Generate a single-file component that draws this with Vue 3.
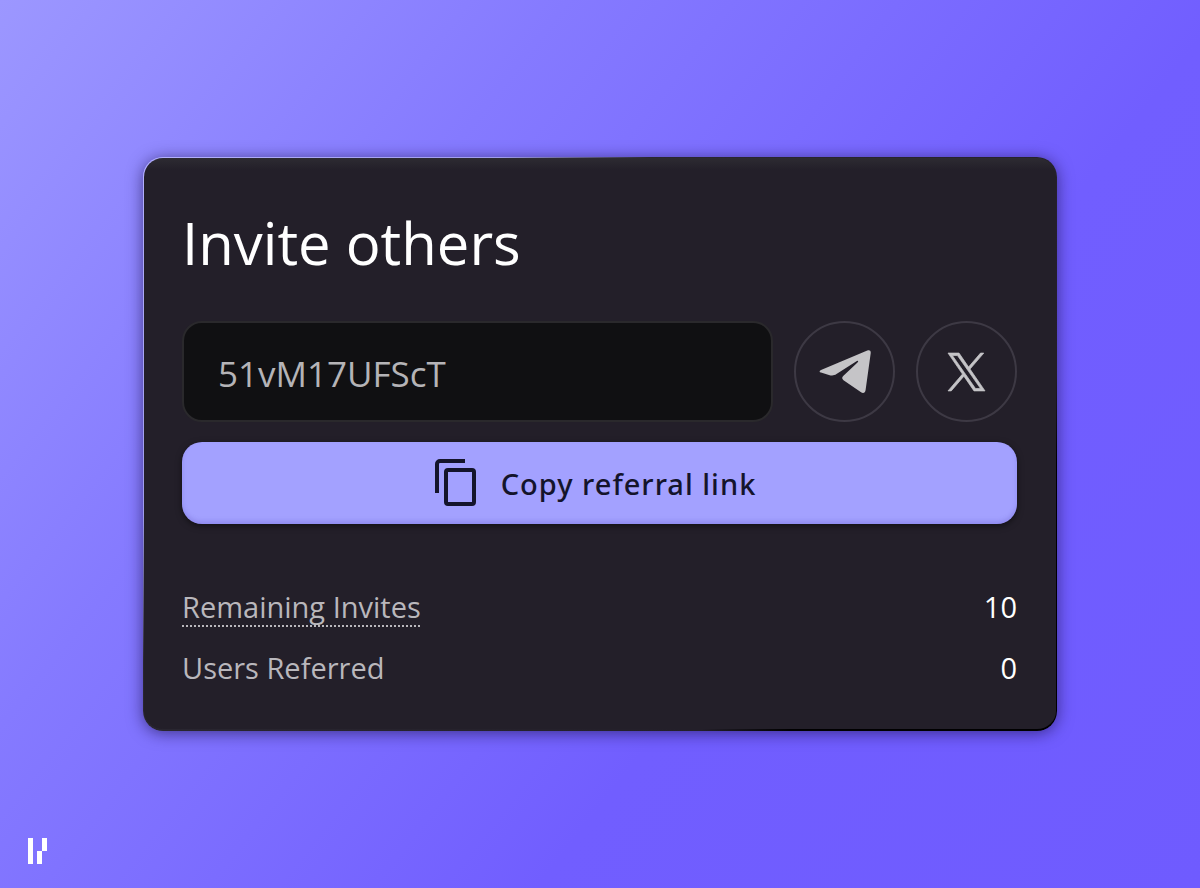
<template>
  <div class="page">
    <main class="invite-card">
      <h1 class="title">Invite others</h1>

      <div class="share-row">
        <input
            v-model="referralCode"
            class="code-input"
            type="text"
            aria-label="Referral code"
            readonly
        />
        <button class="social-button" type="button" aria-label="Share on Telegram">
          <svg class="telegram-icon" viewBox="0 0 52 44">
            <path
                d="M2 20.1L48.300 .6C50.600 -.3 52 .8 51.700 3.200L46.600 40C46.200 43 44.200 43.900 41.700 42.100L24.500 30.200C22.800 29 22.800 27.500 24.200 26.100L38.500 12.500C40 11 38.800 10.200 37.100 11.400L17.500 24.100C14.900 25.800 12.700 25.800 9.900 25L2 22.600C.1 22 .1 20.900 2 20.100Z"
            />
          </svg>
        </button>
        <button class="social-button" type="button" aria-label="Share on X">
          <svg class="x-icon" viewBox="0 0 1200 1227">
            <path
                d="M714.163 519.284L1160.89 0H1055.030L667.137 450.887L357.328 0H0L468.492 681.821L0 1226.370H105.866L515.491 750.218L842.672 1226.370H1200L714.137 519.284H714.163ZM569.165 687.828L521.697 619.934L144.011 79.694H306.615L611.412 515.685L658.880 583.579L1055.080 1150.300H892.476L569.165 687.854V687.828Z"
            />
          </svg>
        </button>
      </div>

      <button class="copy-button" type="button" @click="copyLink">
        <svg class="copy-icon" viewBox="0 0 42 48">
          <path d="M2 34V5a3 3 0 0 1 3-3h25" />
          <rect x="11" y="11" width="28" height="34" rx="2" />
        </svg>
        <span>Copy referral link</span>
      </button>

      <dl class="stats">
        <div v-for="stat in stats" :key="stat.label" class="stat-row">
          <dt :class="{ hinted: stat.hinted }">{{ stat.label }}</dt>
          <dd>{{ stat.value }}</dd>
        </div>
      </dl>
    </main>

    <svg class="brand-mark" viewBox="0 0 20 26" aria-hidden="true">
      <path d="M0 0h5v26H0zM9 13h5v13H9zM14 0h5v13h-5z" />
    </svg>
  </div>
</template>

<script setup>
import { ref } from 'vue';

const referralCode = ref('51vM17UFScT');

const stats = ref([
  { label: 'Remaining Invites', value: 10, hinted: true },
  { label: 'Users Referred', value: 0, hinted: false }
]);

const copyLink = async () => {
  try {
    await navigator.clipboard.writeText(referralCode.value);
  } catch (err) {
    console.error('Error copying referral link:', err);
  }
};
</script>

<style>
body {
  margin: 0;
}
</style>

<style scoped>
.page {
  box-sizing: border-box;
  min-height: 100vh;
  display: grid;
  grid-template-rows: 1fr auto 1fr;
  padding: 0 28px;
  background: linear-gradient(128deg, #9c97ff 0%, #857aff 30%, #715eff 65%, #6f5bff 100%);
  font-family: "Open Sans", "Noto Sans", sans-serif;
}

.invite-card {
  box-sizing: border-box;
  grid-row: 2;
  justify-self: center;
  width: 100%;
  max-width: 914px;
  padding: 49px 39px 31px 38px;
  border: 1px solid transparent;
  border-bottom-width: 2px;
  border-radius: 20px;
  background:
    linear-gradient(180deg, #2d2b32 0, #231f29 12px) padding-box,
    linear-gradient(135deg, #b4b1ff 0%, #a09dee 24%, #2a2731 34%, #231f29 76%, #000 82%) border-box;
  box-shadow: 0 2px 16px rgba(20, 10, 60, 0.6);
}

.title {
  margin: 0;
  font-size: 58px;
  font-weight: 400;
  line-height: 72px;
  color: #fff;
}

/* Code and share buttons */
.share-row {
  display: flex;
  gap: 21px;
  margin-top: 42px;
}

.code-input {
  box-sizing: border-box;
  flex: 1;
  min-width: 0;
  height: 101px;
  padding: 4px 34px 0;
  border: 2px solid #2a292c;
  border-radius: 20px;
  background: #101012;
  color: #b5b4b7;
  font-family: inherit;
  font-size: 35px;
  outline: none;
}

.social-button {
  box-sizing: border-box;
  display: flex;
  align-items: center;
  justify-content: center;
  flex-shrink: 0;
  width: 101px;
  height: 101px;
  padding: 0;
  border: 2px solid #3d3944;
  border-radius: 50%;
  background: transparent;
  cursor: pointer;
}

.social-button svg {
  fill: #c5c4c7;
}

.telegram-icon {
  width: 52px;
  height: 44px;
}

.x-icon {
  width: 37px;
  height: 38px;
  overflow: visible;
  stroke: #c5c4c7;
  stroke-width: 24;
}

.copy-button {
  display: flex;
  align-items: center;
  justify-content: center;
  gap: 24px;
  width: 100%;
  height: 82px;
  margin-top: 20px;
  padding: 0 8px 0 0;
  border: none;
  border-radius: 20px;
  background: #a3a1ff;
  box-shadow: 0 2px 6px rgba(0, 0, 0, 0.5), inset 0 -3px 4px rgba(90, 80, 190, 0.25);
  color: #14142b;
  font-family: "Noto Sans", sans-serif;
  font-size: 29px;
  font-weight: 500;
  letter-spacing: 1px;
  cursor: pointer;
}

.copy-icon {
  width: 42px;
  height: 48px;
  fill: none;
  stroke: currentColor;
  stroke-width: 4;
}

/* Stats */
.stats {
  margin: 52px 0 0;
  color: #b9b7bc;
  font-size: 29px;
  line-height: 61px;
}

.stat-row {
  display: flex;
  justify-content: space-between;
}

.stat-row dd {
  margin: 0;
  color: #fff;
}

.hinted {
  text-decoration: underline dotted 2px;
  text-underline-offset: 7px;
}

.brand-mark {
  grid-row: 3;
  align-self: end;
  width: 20px;
  height: 26px;
  margin-bottom: 24px;
  fill: #fff;
}
</style>
